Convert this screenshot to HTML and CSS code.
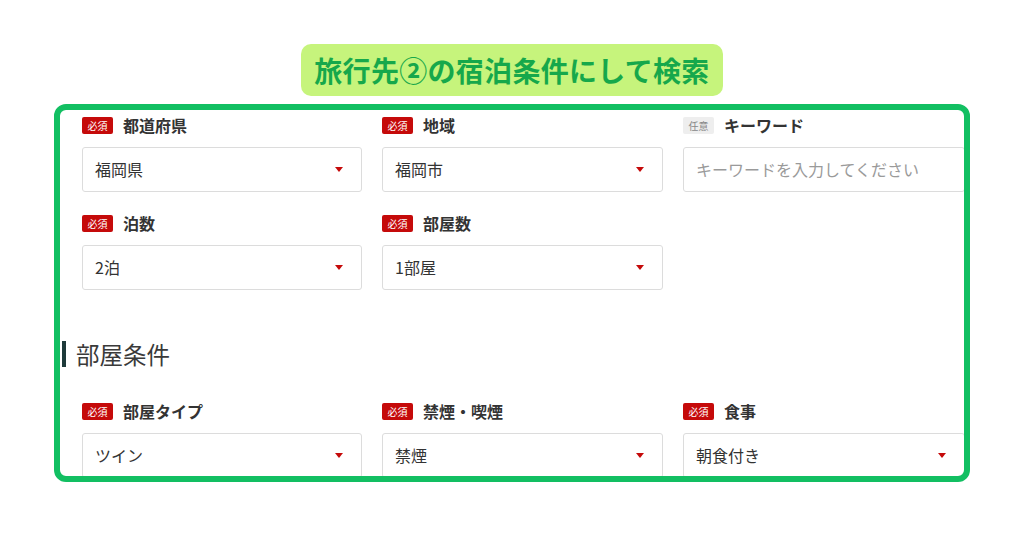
FILE: index.html
```html
<!DOCTYPE html>
<html lang="ja">
<head>
<meta charset="utf-8">
<link rel="stylesheet" href="styles.css">
</head>
<body>
<div class="page">
  <div class="title">旅行先②の宿泊条件にして検索</div>
  <div class="frame">
    <div class="content">
      <div class="grid">
        <div class="field">
          <div class="label"><span class="badge req">必須</span><span class="ltext">都道府県</span></div>
          <div class="select"><span>福岡県</span><span class="arrow"></span></div>
        </div>
        <div class="field">
          <div class="label"><span class="badge req">必須</span><span class="ltext">地域</span></div>
          <div class="select"><span>福岡市</span><span class="arrow"></span></div>
        </div>
        <div class="field">
          <div class="label"><span class="badge opt">任意</span><span class="ltext">キーワード</span></div>
          <div class="select input"><span class="ph">キーワードを入力してください</span></div>
        </div>
        <div class="field">
          <div class="label"><span class="badge req">必須</span><span class="ltext">泊数</span></div>
          <div class="select"><span>2泊</span><span class="arrow"></span></div>
        </div>
        <div class="field">
          <div class="label"><span class="badge req">必須</span><span class="ltext">部屋数</span></div>
          <div class="select"><span>1部屋</span><span class="arrow"></span></div>
        </div>
      </div>
      <h2 class="section">部屋条件</h2>
      <div class="grid">
        <div class="field">
          <div class="label"><span class="badge req">必須</span><span class="ltext">部屋タイプ</span></div>
          <div class="select"><span>ツイン</span><span class="arrow"></span></div>
        </div>
        <div class="field">
          <div class="label"><span class="badge req">必須</span><span class="ltext">禁煙・喫煙</span></div>
          <div class="select"><span>禁煙</span><span class="arrow"></span></div>
        </div>
        <div class="field">
          <div class="label"><span class="badge req">必須</span><span class="ltext">食事</span></div>
          <div class="select"><span>朝食付き</span><span class="arrow"></span></div>
        </div>
      </div>
    </div>
  </div>
</div>
</body>
</html>
```

FILE: styles.css
```css
* { box-sizing: border-box; }
html, body {
  margin: 0;
  padding: 0;
  background: #fff;
  font-family: "Noto Sans CJK JP", "Noto Sans", sans-serif;
  color: #333;
}
.page {
  width: 1024px;
  height: 538px;
  display: flex;
  flex-direction: column;
  align-items: center;
  padding-top: 44px;
}
.title {
  height: 52px;
  padding: 0 13px;
  background: #c6f47c;
  color: #16a84b;
  border-radius: 10px;
  font-size: 28px;
  font-weight: 700;
  line-height: 52px;
  letter-spacing: 0.3px;
}
.frame {
  margin-top: 8px;
  width: 916px;
  height: 378px;
  border: 6px solid #12bf62;
  border-radius: 12px;
  overflow: hidden;
  background: #fff;
}
.content {
  padding: 6px 0 0 22px;
  width: 960px;
}
.grid {
  display: grid;
  grid-template-columns: 280px 281px 282px;
  column-gap: 20px;
  row-gap: 22px;
}
.label {
  height: 19px;
  display: flex;
  align-items: center;
  margin-bottom: 12px;
}
.badge {
  width: 31px;
  height: 17px;
  border-radius: 2px;
  font-size: 10px;
  line-height: 17px;
  text-align: center;
  margin-right: 10px;
}
.badge.req { background: #c50a0a; color: #fff; }
.badge.opt { background: #eeeeee; color: #888; }
.ltext {
  font-size: 16px;
  font-weight: 700;
  color: #333;
  line-height: 19px;
}
.select {
  height: 45px;
  border: 1px solid #dcdcdc;
  border-radius: 3px;
  display: flex;
  align-items: center;
  justify-content: space-between;
  padding: 0 18px 1px 12px;
  font-size: 16px;
  color: #333;
}
.ph { color: #9a9a9a; }
.arrow {
  width: 0;
  height: 0;
  border-left: 4px solid transparent;
  border-right: 4px solid transparent;
  border-top: 5px solid #c50a0a;
}
.section {
  margin: 51px 0 35px -20px;
  height: 26px;
  border-left: 4px solid #1e3a3a;
  padding-left: 10px;
  font-size: 23.5px;
  font-weight: 400;
  line-height: 26px;
  color: #3a3a3a;
}
```
